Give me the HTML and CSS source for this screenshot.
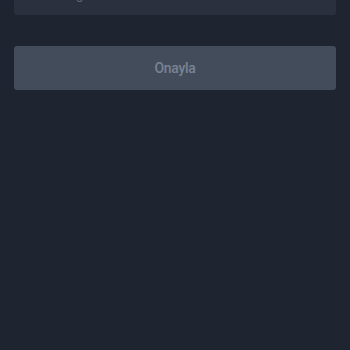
FILE: index.html
```html
<!DOCTYPE html>
<html lang="tr">
<head>
    <meta charset="UTF-8">
    <meta name="viewport" content="width=device-width, initial-scale=1.0">
    <title>Onayla</title>
    <link rel="stylesheet" href="styles.css">
</head>
<body>
    <div class="form">
        <div class="code-input">
            <span class="code-text">Kodu girin</span>
        </div>
        <button class="confirm-btn" disabled>Onayla</button>
    </div>
</body>
</html>
```

FILE: styles.css
```css
* {
    margin: 0;
    padding: 0;
    box-sizing: border-box;
}

body {
    background-color: #1f2530;
    font-family: Roboto, "Noto Sans", sans-serif;
    height: 100vh;
    overflow: hidden;
}

.form {
    display: flex;
    flex-direction: column;
    padding: 0 14px;
}

.code-input {
    height: 48px;
    margin-top: -33px; /* scrolled, only the bottom shows */
    background-color: #2a303d;
    border-radius: 3px;
    display: flex;
    align-items: flex-end;
    padding: 0 16px 12px 26px;
}

.code-text {
    color: #5d6574;
    font-size: 14px;
    line-height: 18px;
}

.confirm-btn {
    margin-top: 31px;
    height: 44px;
    border: none;
    border-radius: 3px;
    background-color: #434c5b;
    color: #7a8393;
    font-family: Roboto, "Noto Sans", sans-serif;
    font-size: 14px;
    font-weight: 500;
    letter-spacing: -0.3px;
}
```
